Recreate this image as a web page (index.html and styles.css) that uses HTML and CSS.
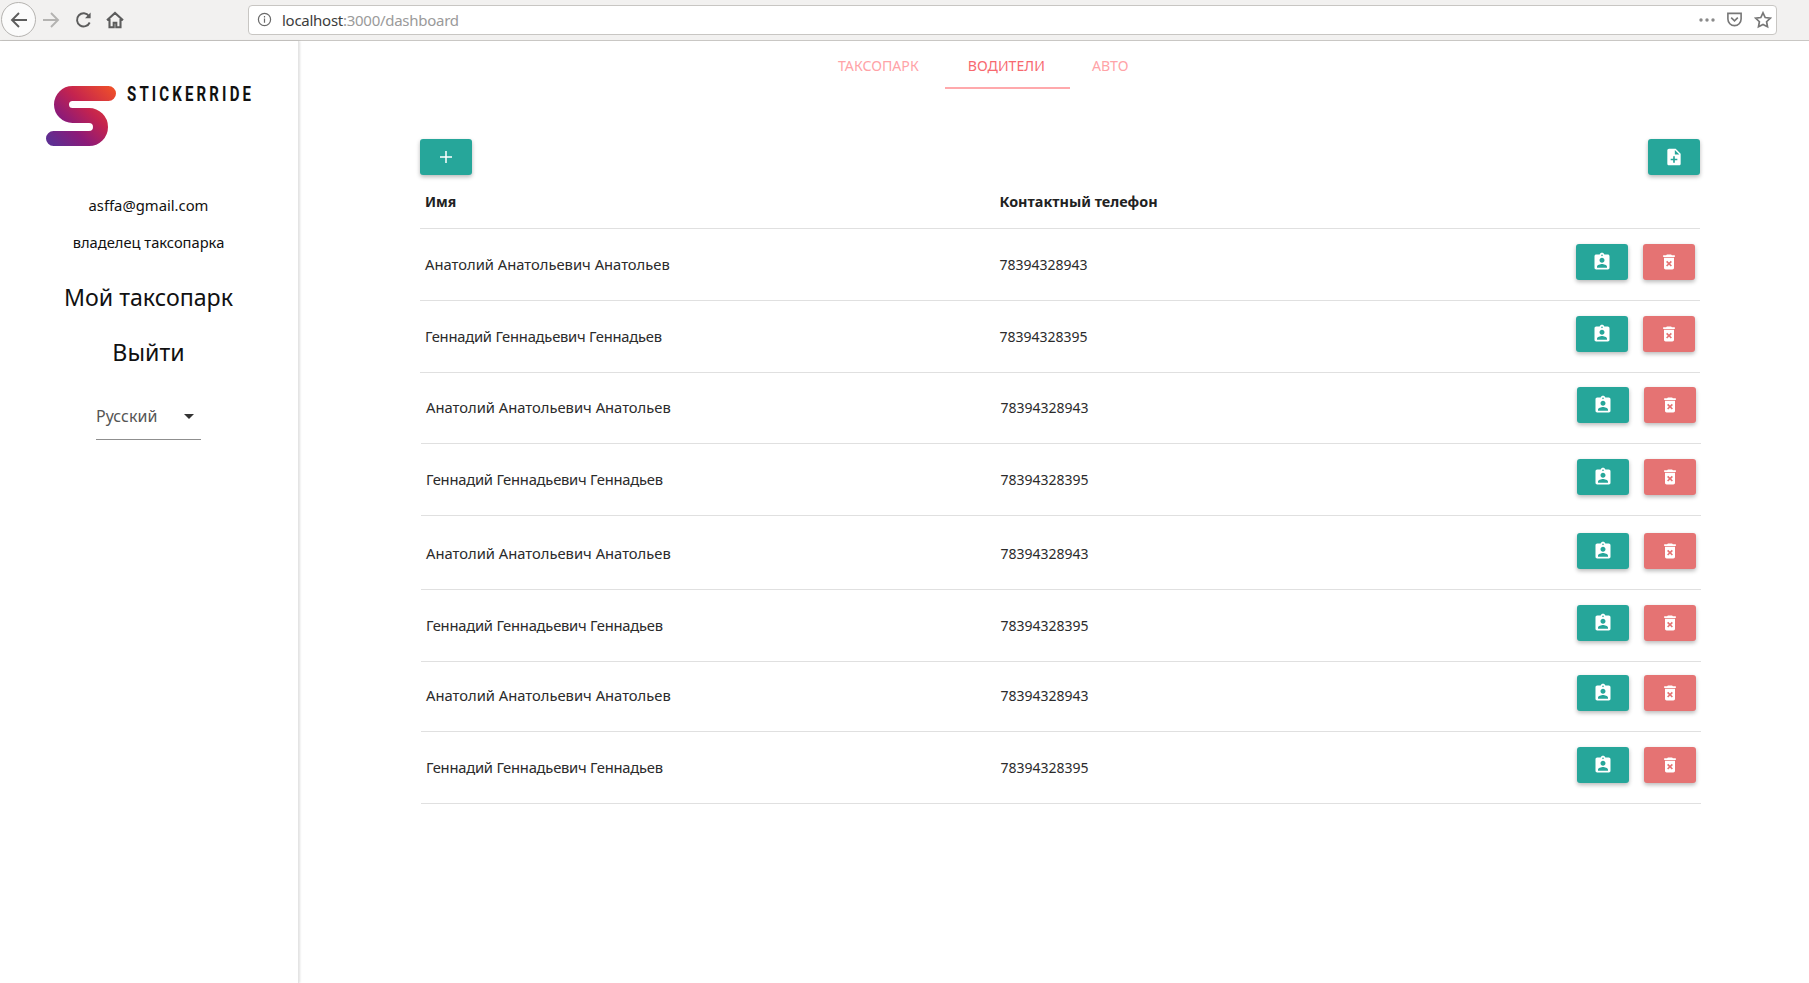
FILE: index.html
```html
<!DOCTYPE html>
<html lang="ru">
<head>
<meta charset="utf-8">
<title>Stickerride</title>
<link rel="stylesheet" href="styles.css">
</head>
<body>
<svg class="sprites" width="0" height="0" aria-hidden="true">
  <symbol id="i-badge" viewBox="0 0 24 24"><path d="M19 3h-4.18C14.4 1.84 13.3 1 12 1c-1.3 0-2.4.84-2.82 2H5c-1.1 0-2 .9-2 2v14c0 1.1.9 2 2 2h14c1.1 0 2-.9 2-2V5c0-1.1-.9-2-2-2zm-7 0c.55 0 1 .45 1 1s-.45 1-1 1-1-.45-1-1 .45-1 1-1zm0 4c1.66 0 3 1.34 3 3s-1.34 3-3 3-3-1.34-3-3 1.34-3 3-3zm6 12H6v-1.4c0-2 4-3.1 6-3.1s6 1.1 6 3.1V19z"/></symbol>
  <symbol id="i-trash" viewBox="0 0 24 24"><path d="M6 19c0 1.1.9 2 2 2h8c1.1 0 2-.9 2-2V7H6v12zm2.46-7.12l1.41-1.41L12 12.59l2.12-2.12 1.41 1.41L13.41 14l2.12 2.12-1.41 1.41L12 15.41l-2.12 2.12-1.41-1.41L10.59 14l-2.13-2.12zM15.5 4l-1-1h-5l-1 1H5v2h14V4z"/></symbol>
</svg>

<header class="browser">
  <div class="nav">
    <button class="nav-back" aria-label="Назад">
      <svg viewBox="0 0 20 20" width="20" height="20"><path d="M18 10H3M10 3L3 10l7 7" class="ico-stroke"/></svg>
    </button>
    <svg class="nav-icon nav-forward" viewBox="0 0 20 20" width="20" height="20"><path d="M2 10h15M10 3l7 7-7 7" class="ico-stroke"/></svg>
    <svg class="nav-icon nav-reload" viewBox="0 0 20 20" width="20" height="20"><path d="M15.7 12.5A6.6 6.6 0 1 1 15 6" class="ico-stroke"/><path d="M16.6 2.6v5.6H11z" class="ico-fill"/></svg>
    <svg class="nav-icon" viewBox="0 0 20 20" width="20" height="20"><path d="M2 10.2L10 3l8 7.200M4.500 9v8.200h4.200v-4.500h2.600v4.500h4.200V9" class="ico-stroke ico-home"/></svg>
  </div>
  <div class="urlbar">
    <svg class="url-info" viewBox="0 0 16 16" width="15" height="15"><circle cx="8" cy="8" r="6.500"/><path d="M8 7v4.500M8 4.200v1.600"/></svg>
    <span class="url-host">localhost</span><span class="url-path">:3000/dashboard</span>
    <div class="url-actions">
      <svg viewBox="0 0 18 6" width="18" height="6" class="url-dots"><circle cx="3" cy="3" r="1.700"/><circle cx="9" cy="3" r="1.700"/><circle cx="15" cy="3" r="1.700"/></svg>
      <svg viewBox="0 0 18 18" width="17" height="17" class="url-line"><path d="M2 2.500h14v6a7 7 0 0 1-14 0z"/><path d="M5.500 7L9 10.500 12.500 7"/></svg>
      <svg viewBox="0 0 18 18" width="18" height="18" class="url-line"><path d="M9 1.800l2.200 4.700 5.100.7-3.700 3.500.9 5.100L9 13.400l-4.500 2.400.9-5.100-3.700-3.500 5.100-.7z"/></svg>
    </div>
  </div>
</header>

<div class="app">
  <aside class="sidebar">
    <div class="brand">
      <svg class="brand-mark" viewBox="0 0 80 70" width="80" height="70" aria-hidden="true">
        <defs>
          <linearGradient id="logo-grad" gradientUnits="userSpaceOnUse" x1="66" y1="4" x2="8" y2="62">
            <stop offset="0" stop-color="#ee4f2a"/>
            <stop offset="0.4" stop-color="#c4234f"/>
            <stop offset="0.7" stop-color="#8c1a78"/>
            <stop offset="1" stop-color="#5e2e92"/>
          </linearGradient>
        </defs>
        <path d="M62.500 10.500H26.500A11 11 0 0 0 26.500 32.500H43A11.500 11.500 0 0 1 43 55.500H7.500" fill="none" stroke="url(#logo-grad)" stroke-width="15" stroke-linecap="round"/>
      </svg>
      <span class="brand-name">STICKERRIDE</span>
    </div>
    <p class="user-line user-email">asffa@gmail.com</p>
    <p class="user-line user-role">владелец таксопарка</p>
    <a class="side-link side-link-first">Мой таксопарк</a>
    <a class="side-link">Выйти</a>
    <div class="lang">
      <span>Русский</span>
      <i class="lang-caret"></i>
    </div>
  </aside>

  <main class="main">
    <nav class="tabs">
      <a class="tab tab-first">ТАКСОПАРК</a>
      <a class="tab tab-active">ВОДИТЕЛИ</a>
      <a class="tab">АВТО</a>
    </nav>

    <div class="toolbar">
      <button class="btn btn-teal" aria-label="Добавить">
        <svg viewBox="0 0 14 14" width="14" height="14" class="plus"><path d="M7 1v12M1 7h12"/></svg>
      </button>
      <button class="btn btn-teal" aria-label="Добавить файл">
        <svg viewBox="0 0 24 24" width="20" height="20"><path d="M14 2H6c-1.100 0-1.990.9-1.990 2L4 20c0 1.100.89 2 1.990 2H18c1.100 0 2-.9 2-2V8l-6-6zm2 14h-3v3h-2v-3H8v-2h3v-3h2v3h3v2zm-3-7V3.500L18.500 9H13z"/></svg>
      </button>
    </div>

    <section class="table">
      <div class="row row-head">
        <div>Имя</div>
        <div class="head-phone">Контактный телефон</div>
      </div>
      <div class="row">
        <div class="name">Анатолий Анатольевич Анатольев</div>
        <div>78394328943</div>
        <div class="actions">
          <button class="btn btn-teal"><svg width="20" height="20"><use href="#i-badge"/></svg></button>
          <button class="btn btn-red"><svg width="20" height="20"><use href="#i-trash"/></svg></button>
        </div>
      </div>
      <div class="row">
        <div class="name name-tight">Геннадий Геннадьевич Геннадьев</div>
        <div>78394328395</div>
        <div class="actions">
          <button class="btn btn-teal"><svg width="20" height="20"><use href="#i-badge"/></svg></button>
          <button class="btn btn-red"><svg width="20" height="20"><use href="#i-trash"/></svg></button>
        </div>
      </div>
    </section>

    <section class="table table-shifted">
      <div class="row row-h71">
        <div class="name">Анатолий Анатольевич Анатольев</div>
        <div>78394328943</div>
        <div class="actions">
          <button class="btn btn-teal"><svg width="20" height="20"><use href="#i-badge"/></svg></button>
          <button class="btn btn-red"><svg width="20" height="20"><use href="#i-trash"/></svg></button>
        </div>
      </div>
      <div class="row">
        <div class="name name-tight">Геннадий Геннадьевич Геннадьев</div>
        <div>78394328395</div>
        <div class="actions">
          <button class="btn btn-teal"><svg width="20" height="20"><use href="#i-badge"/></svg></button>
          <button class="btn btn-red"><svg width="20" height="20"><use href="#i-trash"/></svg></button>
        </div>
      </div>
      <div class="row row-h74">
        <div class="name">Анатолий Анатольевич Анатольев</div>
        <div>78394328943</div>
        <div class="actions">
          <button class="btn btn-teal"><svg width="20" height="20"><use href="#i-badge"/></svg></button>
          <button class="btn btn-red"><svg width="20" height="20"><use href="#i-trash"/></svg></button>
        </div>
      </div>
      <div class="row">
        <div class="name name-tight">Геннадий Геннадьевич Геннадьев</div>
        <div>78394328395</div>
        <div class="actions">
          <button class="btn btn-teal"><svg width="20" height="20"><use href="#i-badge"/></svg></button>
          <button class="btn btn-red"><svg width="20" height="20"><use href="#i-trash"/></svg></button>
        </div>
      </div>
      <div class="row row-h70">
        <div class="name">Анатолий Анатольевич Анатольев</div>
        <div>78394328943</div>
        <div class="actions">
          <button class="btn btn-teal"><svg width="20" height="20"><use href="#i-badge"/></svg></button>
          <button class="btn btn-red"><svg width="20" height="20"><use href="#i-trash"/></svg></button>
        </div>
      </div>
      <div class="row">
        <div class="name name-tight">Геннадий Геннадьевич Геннадьев</div>
        <div>78394328395</div>
        <div class="actions">
          <button class="btn btn-teal"><svg width="20" height="20"><use href="#i-badge"/></svg></button>
          <button class="btn btn-red"><svg width="20" height="20"><use href="#i-trash"/></svg></button>
        </div>
      </div>
    </section>
  </main>
</div>
</body>
</html>
```
FILE: styles.css
```css
* { box-sizing: border-box; }
html, body { height: 100%; }
body {
  margin: 0;
  overflow: hidden;
  display: flex;
  flex-direction: column;
  background: #fff;
  color: #111;
  font-family: "Noto Sans", "Open Sans", sans-serif;
}
.sprites { position: absolute; }
button { border: 0; padding: 0; font: inherit; }

/* browser chrome */
.browser {
  flex: 0 0 41px;
  display: flex;
  align-items: center;
  background: #f2f1f0;
  border-bottom: 1px solid #c9c7c4;
  padding: 0 32px 1px 1px;
}
.nav { display: flex; align-items: center; width: 247px; }
.nav-back {
  width: 35px;
  height: 35px;
  border-radius: 50%;
  border: 1px solid #b5b3b0;
  background: #fbfbfb;
  display: flex;
  align-items: center;
  justify-content: center;
  margin-right: 5px;
}
.nav-icon { margin-right: 12px; flex: none; }
.nav-forward { margin-right: 13px; }
.nav-reload { margin-right: 11px; }
.ico-stroke { fill: none; stroke: #5c5c5c; stroke-width: 1.900; }
.ico-fill { fill: #5c5c5c; }
.ico-home { stroke-width: 2.100; }
.nav-forward .ico-stroke { stroke: #b4b3b1; }
.urlbar {
  flex: 1;
  height: 30px;
  background: #fff;
  border: 1px solid #c8c6c3;
  border-radius: 4px;
  display: flex;
  align-items: center;
  padding: 0 4px 0 8px;
  font-size: 15px;
  letter-spacing: -.27px;
  white-space: nowrap;
}
.url-info { margin-right: 10px; fill: none; stroke: #6a6a6a; stroke-width: 1.300; flex: none; }
.url-host { color: #3c3c3c; }
.url-path { color: #9a9a9a; }
.url-actions { margin-left: auto; display: flex; align-items: center; gap: 11px; }
.url-dots { fill: #8a8a8a; margin-right: -1px; }
.url-line { fill: none; stroke: #777; stroke-width: 1.700; }

/* layout */
.app { flex: 1; display: flex; min-height: 0; }
.sidebar {
  flex: 0 0 299px;
  display: flex;
  flex-direction: column;
  align-items: center;
  border-right: 1px solid #e4e4e4;
  box-shadow: 1px 0 2px rgba(0, 0, 0, .12);
  padding: 40px 1px 0 0;
}
.brand {
  align-self: flex-start;
  display: flex;
  align-items: flex-start;
  margin-left: 46px;
  height: 70px;
}
.brand-mark { flex: none; margin-top: 2px; }
.brand-name {
  display: block;
  width: 95px;
  margin-left: 1px;
  margin-top: 3px;
  font-family: Roboto, sans-serif;
  font-weight: 700;
  font-size: 20px;
  line-height: 20px;
  letter-spacing: 4.200px;
  color: #111;
  transform: scaleX(.75);
  transform-origin: left center;
  white-space: nowrap;
}
.user-line { margin: 0; text-align: center; line-height: 20px; }
.user-email { margin-top: 44px; font-size: 14.800px; }
.user-role { margin-top: 17px; font-size: 14.700px; }
.side-link { display: block; font-size: 23.200px; line-height: 32px; text-align: center; color: #111; margin-top: 23px; }
.side-link-first { margin-top: 29px; }
.lang {
  width: 105px;
  height: 45px;
  margin-top: 27px;
  display: flex;
  align-items: center;
  justify-content: space-between;
  border-bottom: 1px solid #8f8f8f;
  color: #555;
  font-size: 16px;
  padding: 0 7px 2px 0;
}
.lang-caret {
  width: 0;
  height: 0;
  border-left: 5px solid transparent;
  border-right: 5px solid transparent;
  border-top: 5px solid #333;
}

.main { flex: 1; min-width: 0; padding-left: 121px; }
.tabs { display: flex; height: 49px; padding-left: 394px; font-size: 14.150px; }
.tab {
  padding: 0 24px;
  height: 48px;
  line-height: 50px;
  color: #ffa3a7;
  white-space: nowrap;
}
.tab-first { padding-right: 26px; }
.tab-active { color: #f7696f; border-bottom: 2px solid #ffa9ac; margin-right: -2px; padding: 0 25px 0 23px; }

.toolbar { width: 1280px; margin-top: 49px; display: flex; justify-content: space-between; }
.btn {
  width: 52px;
  height: 36px;
  border-radius: 3px;
  display: inline-flex;
  align-items: center;
  justify-content: center;
  fill: #fff;
  box-shadow: 0 2px 4px rgba(0, 0, 0, .28);
}
.btn-teal { background: #26a69a; }
.btn-red { background: #e57373; }
.plus { fill: none; stroke: #fff; stroke-width: 1.500; }

.table { width: 1280px; font-size: 14px; color: #2b2b2b; }
.table-shifted { margin-left: 1px; }
.row {
  display: grid;
  grid-template-columns: 574.500px 1fr auto;
  align-items: center;
  height: 72px;
  padding: 0 5px;
  border-bottom: 1px solid #e0e0e0;
}
.name { font-size: 14.750px; padding-bottom: 2px; }
.name-tight { letter-spacing: -.23px; }
.head-phone { font-size: 14.400px; }
.row-head { height: 54px; font-weight: 700; color: #222; }
.row-h70 { height: 70px; padding-bottom: 2px; }
.row-h71 { height: 71px; padding-bottom: 2px; }
.row-h71 .name { padding-bottom: 0; }
.row-h74 { height: 74px; padding-top: 2px; }
.actions { display: flex; gap: 15px; align-self: start; margin-top: 15px; }
.row-h70 .actions { margin-top: 13px; }
.row-h71 .actions { margin-top: 14px; }
```
